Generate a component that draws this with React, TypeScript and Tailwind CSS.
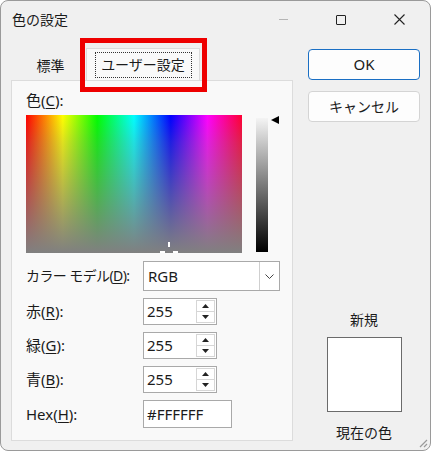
import React from 'react'

const font = "font-['Noto_Sans','Noto_Sans_CJK_JP',sans-serif]"

function Spin({ value }: { value: string }) {
  return (
    <div className="flex h-[27px] w-[74px] border border-[#a9a9a9] bg-white">
      <div className="flex flex-1 items-center pl-[3px] text-[15px] leading-none">{value}</div>
      <div className="my-[1px] mr-[1px] flex w-[19px] flex-col border border-[#d6d6d6]">
        <div className="flex flex-1 items-center justify-center border-b border-[#d6d6d6]">
          <svg width="7" height="4" viewBox="0 0 7 4"><path d="M0 4 L3.5 0 L7 4 Z" fill="#222" /></svg>
        </div>
        <div className="flex flex-1 items-center justify-center">
          <svg width="7" height="4" viewBox="0 0 7 4"><path d="M0 0 L3.5 4 L7 0 Z" fill="#222" /></svg>
        </div>
      </div>
    </div>
  )
}

function Label({ base, key_ }: { base: string; key_: string }) {
  return (
    <span className="whitespace-nowrap text-[15px] leading-none">
      {base}(<span className="underline underline-offset-2">{key_}</span>):
    </span>
  )
}

export default function App() {
  return (
    <div className={`h-[453px] w-[431px] bg-white ${font} text-[#1b1b1b]`}>
      <div className="relative flex h-[451px] w-[431px] flex-col rounded-lg border border-[#9a9a9a] bg-[#f0f0f0]">
        {/* title bar */}
        <div className="flex h-[37px] items-center">
          <span className="pl-[11px] text-[14px]">色の設定</span>
          <div className="ml-auto mr-[8px] flex items-center">
            <div className="flex h-[37px] w-[46px] items-center justify-center">
              <div className="h-px w-[9px] bg-[#b5b5b5]" />
            </div>
            <div className="ml-[12px] flex h-[37px] w-[46px] items-center justify-center">
              <div className="h-[10px] w-[10px] rounded-[1px] border border-[#222]" />
            </div>
            <div className="ml-[12px] flex h-[37px] w-[46px] items-center justify-center">
              <svg width="11" height="11" viewBox="0 0 11 11">
                <path d="M0.5 0.5 L10.5 10.5 M10.5 0.5 L0.5 10.5" stroke="#222" strokeWidth="1.1" />
              </svg>
            </div>
          </div>
        </div>

        <div className="flex flex-1 pl-[10px]">
          {/* left: tabs + panel */}
          <div className="flex w-[282px] flex-col">
            <div className="flex h-[42px] items-end pl-[3px]">
              <div className="flex h-[29px] w-[73px] items-center justify-center text-[14px]">標準</div>
              <div className="relative -ml-[1px] flex h-[32px] w-[114px] items-center justify-center border border-b-0 border-[#dcdcdc] bg-[#f9f9f9]">
                <div className="flex h-[26px] w-[97px] items-center justify-center border border-dotted border-[#333] text-[14px]">
                  ユーザー設定
                </div>
                <div className="pointer-events-none absolute -left-[7px] -top-[11px] h-[54px] w-[127px] border-[5px] border-[#ee0000]" />
              </div>
            </div>
            <div className="flex h-[361px] flex-col border border-[#dcdcdc] bg-[#f9f9f9] pl-[14px] pt-[12px]">
              <Label base="色" key_="C" />
              <div className="mt-[7px] flex">
                <div className="relative h-[138px] w-[216px] bg-[linear-gradient(to_bottom,rgba(128,128,128,0),rgba(128,128,128,0.25)_20%,#808080),linear-gradient(to_right,#ff0000,#ffff00_17%,#00ff00_33%,#00ffff_50%,#0000ff_67%,#ff00ff_84%,#ff0033)]">
                  <svg className="absolute left-[134px] top-[126px]" width="18" height="12" viewBox="0 0 18 12">
                    <path d="M8 1 h2 v5 h-2 Z M0 10 h5 v2 h-5 Z M13 10 h5 v2 h-5 Z" fill="#fff" />
                  </svg>
                </div>
                <div className="ml-[14px] mt-[3px] h-[134px] w-[12px] bg-[linear-gradient(to_bottom,#f4f4f4,#000)]" />
                <svg className="ml-[3px] mt-[1px]" width="8" height="8" viewBox="0 0 8 8">
                  <path d="M8 0 L0 4 L8 8 Z" fill="#000" />
                </svg>
              </div>

              <div className="mt-[8px] grid grid-cols-[117px_auto] items-center gap-y-[7px]">
                <span className="whitespace-nowrap text-[14px] leading-none tracking-[-0.6px]">
                  カラー モデル(<span className="underline underline-offset-2">D</span>):
                </span>
                <div className="flex h-[30px] w-[137px] border border-[#a9a9a9] bg-white">
                  <span className="flex flex-1 items-center pl-[4px] text-[15px]">RGB</span>
                  <div className="flex w-[20px] items-center justify-center border-l border-[#cfcfcf]">
                    <svg width="9" height="5" viewBox="0 0 9 5">
                      <path d="M0.5 0.5 L4.5 4.5 L8.5 0.5" stroke="#444" fill="none" strokeWidth="1" />
                    </svg>
                  </div>
                </div>
                <Label base="赤" key_="R" />
                <Spin value="255" />
                <Label base="緑" key_="G" />
                <Spin value="255" />
                <Label base="青" key_="B" />
                <Spin value="255" />
                <Label base="Hex" key_="H" />
                <div className="flex h-[28px] w-[89px] items-center border border-[#a9a9a9] bg-white pl-[3px] text-[15px]">
                  #FFFFFF
                </div>
              </div>
            </div>
          </div>

          {/* right column */}
          <div className="ml-[15px] flex w-[112px] flex-col pt-[11px]">
            <button className="h-[31px] w-[112px] rounded-[4px] border border-[#1a6fc4] bg-[#fdfdfd] text-[15px]">OK</button>
            <button className="mt-[11px] h-[31px] w-[112px] rounded-[4px] border border-[#d4d4d4] bg-[#fdfdfd] text-[14px]">
              キャンセル
            </button>
            <div className="mt-[191px] flex flex-col items-center">
              <span className="text-[14px] leading-none">新規</span>
              <div className="mt-[10px] h-[75px] w-[75px] border border-[#6b6b6b] bg-white" />
              <span className="mt-[14px] text-[14px] leading-none">現在の色</span>
            </div>
          </div>
        </div>

        <svg className="absolute bottom-[2px] right-[2px]" width="11" height="11" viewBox="0 0 11 11">
          <path d="M10 3 L3 10 M10 7 L7 10" stroke="#9a9a9a" strokeWidth="1.2" />
        </svg>
      </div>
    </div>
  )
}
